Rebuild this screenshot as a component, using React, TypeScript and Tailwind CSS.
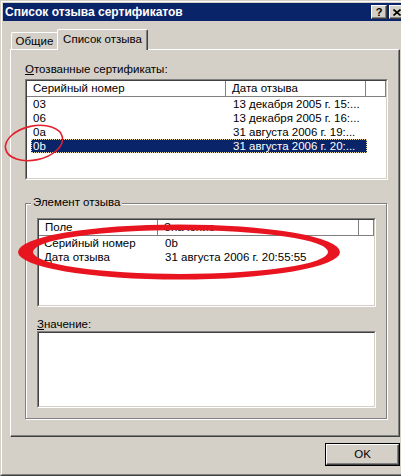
import React from "react";

type Row = [string, string];

const revoked: Row[] = [
  ["03", "13 декабря 2005 г. 15:..."],
  ["06", "13 декабря 2005 г. 16:..."],
  ["0a", "31 августа 2006 г. 19:..."],
  ["0b", "31 августа 2006 г. 20:..."],
];

const details: Row[] = [
  ["Серийный номер", "0b"],
  ["Дата отзыва", "31 августа 2006 г. 20:55:55"],
];

// classic sunken 3D frame (outer + inner)
function Sunken({ className, children }: { className: string; children?: React.ReactNode }) {
  return (
    <div className={`border border-t-[#808080] border-l-[#808080] border-r-white border-b-white ${className}`}>
      <div className="h-full border border-t-[#404040] border-l-[#404040] border-r-[#d4d0c8] border-b-[#d4d0c8] bg-white overflow-hidden">
        {children}
      </div>
    </div>
  );
}

function HeaderCell({ className, children }: { className: string; children?: React.ReactNode }) {
  return (
    <div
      className={`h-full border-r border-b border-[#808080] shadow-[inset_1px_1px_0_#fff] pl-[6px] leading-[15px] whitespace-nowrap overflow-hidden ${className}`}
    >
      {children}
    </div>
  );
}

function TitleButton({ children }: { children: React.ReactNode }) {
  return (
    <div className="w-[16px] h-[14px] bg-[#d4d0c8] border border-t-white border-l-white border-r-[#404040] border-b-[#404040] shadow-[inset_-1px_-1px_0_#808080] flex items-center justify-center text-black">
      {children}
    </div>
  );
}

export default function App() {
  return (
    <div className="relative w-[401px] h-[476px] overflow-hidden bg-[#d4d0c8] font-['Liberation_Sans',Arial,sans-serif] text-[11.5px] text-black">
      {/* WINDOW FRAME */}
      <div className="w-[410px] h-[476px] border border-t-[#d4d0c8] border-l-[#d4d0c8] border-r-[#404040] border-b-[#404040]">
        <div className="h-full border border-t-white border-l-white border-r-[#808080] border-b-[#808080] p-[1px] flex flex-col">
          {/* TITLE BAR */}
          <div className="h-[18px] bg-[#0a246a] flex items-center pl-[2px] pr-[2px]">
            <span className="text-white font-bold text-[12px] leading-[18px] flex-1">Список отзыва сертификатов</span>
            <div className="flex gap-[2px]">
              <TitleButton>
                <span className="font-bold text-[11px] leading-none">?</span>
              </TitleButton>
              <TitleButton>
                <svg width="8" height="7" viewBox="0 0 8 7">
                  <path d="M0.5 0.5 L7.5 6.5 M7.5 0.5 L0.5 6.5" stroke="#000" strokeWidth="1.6" />
                </svg>
              </TitleButton>
            </div>
          </div>

          {/* BODY */}
          <div className="px-[7px] flex flex-col">
            {/* TABS */}
            <div className="h-[28px] flex items-end pl-[1px]">
              <div className="w-[46px] h-[17px] border-t border-l border-white rounded-tl-[2px] flex items-center justify-center leading-[16px]">
                Общие
              </div>
              <div className="relative z-10 -mb-[1px] w-[91px] h-[21px] bg-[#d4d0c8] border-t border-l border-white border-r border-r-[#404040] shadow-[inset_-1px_0_0_#808080] rounded-t-[2px] flex items-start justify-center pt-[3px] leading-[13px]">
                Список отзыва
              </div>
            </div>

            {/* TAB PANEL */}
            <div className="h-[388px] border border-t-white border-l-white border-r-[#404040] border-b-[#404040] shadow-[inset_-1px_-1px_0_#808080] pl-[14px] flex flex-col">
              <div className="mt-[13px] h-[13px] leading-[13px]">
                <span className="underline">О</span>тозванные сертификаты:
              </div>

              {/* REVOKED LIST */}
              <Sunken className="mt-[3px] w-[363px] h-[101px]">
                <div className="h-[16px] flex">
                  <HeaderCell className="w-[199px]">Серийный номер</HeaderCell>
                  <HeaderCell className="w-[140px]">Дата отзыва</HeaderCell>
                  <HeaderCell className="flex-1" />
                </div>
                {revoked.map(([serial, date], i) => {
                  const selected = i === revoked.length - 1;
                  return (
                    <div
                      key={serial}
                      className={`ml-[4px] w-[336px] h-[14px] leading-[14px] flex whitespace-nowrap ${
                        selected
                          ? "bg-[#0a246a] text-white outline outline-1 outline-dotted outline-[#e9d9a6] -outline-offset-1"
                          : ""
                      }`}
                    >
                      <div className="w-[195px] pl-[2px]">{serial}</div>
                      <div className="pl-[7px]">{date}</div>
                    </div>
                  );
                })}
              </Sunken>

              {/* GROUP BOX */}
              <div className="relative mt-[23px] w-[362px] h-[216px] border border-[#808080] shadow-[inset_1px_1px_0_#fff,1px_1px_0_#fff] pl-[11px] pt-[14px] flex flex-col">
                <span className="absolute left-[5px] -top-[8px] px-[2px] bg-[#d4d0c8] leading-[13px]">
                  Элемент отзыва
                </span>

                <Sunken className="w-[339px] h-[89px]">
                  <div className="h-[16px] flex">
                    <HeaderCell className="w-[119px]">Поле</HeaderCell>
                    <HeaderCell className="w-[201px]">Значение</HeaderCell>
                    <HeaderCell className="flex-1" />
                  </div>
                  {details.map(([field, value]) => (
                    <div key={field} className="h-[14px] leading-[14px] flex whitespace-nowrap">
                      <div className="w-[119px] pl-[5px]">{field}</div>
                      <div className="pl-[7px]">{value}</div>
                    </div>
                  ))}
                </Sunken>

                <div className="mt-[11px] h-[13px] leading-[13px]">
                  <span className="underline">З</span>начение:
                </div>
                <Sunken className="w-[339px] h-[77px]" />
              </div>
            </div>

            {/* BUTTONS */}
            <div className="mt-[6px] flex justify-end">
              <button className="w-[75px] h-[23px] border border-black bg-[#d4d0c8]">
                <div className="h-full border border-t-white border-l-white border-r-[#404040] border-b-[#404040] shadow-[inset_-1px_-1px_0_#808080] flex items-center justify-center leading-[13px]">
                  OK
                </div>
              </button>
            </div>
          </div>
        </div>
      </div>

      {/* RED ANNOTATIONS */}
      <svg className="absolute inset-0 pointer-events-none" width="401" height="476" viewBox="0 0 401 476">
        <ellipse
          cx="34"
          cy="143"
          rx="29"
          ry="17"
          transform="rotate(-12 34 143)"
          fill="none"
          stroke="#e3202b"
          strokeWidth="1.6"
        />
        <path
          fillRule="evenodd"
          fill="#e8141f"
          d="M18 252 A161 27.5 0 1 0 340 252 A161 27.5 0 1 0 18 252 Z M33 252 A147.5 22 0 1 0 328 252 A147.5 22 0 1 0 33 252 Z"
        />
      </svg>
    </div>
  );
}
